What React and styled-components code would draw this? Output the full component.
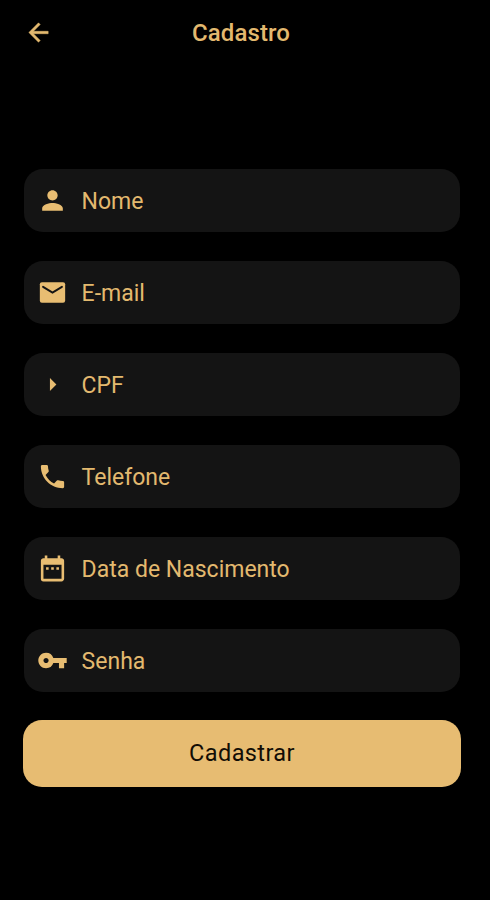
import React from "react";
import styled, { createGlobalStyle } from "styled-components";
import {
  MdArrowBack,
  MdArrowRight,
  MdDateRange,
  MdPerson,
  MdPhone,
  MdVpnKey,
} from "react-icons/md";

const GlobalStyle = createGlobalStyle`
  * {
    box-sizing: border-box;
  }
  body {
    margin: 0;
    background: #000;
    font-family: Roboto, sans-serif;
  }
`;

const Screen = styled.div`
  min-height: 900px;
  background: #000;
  color: #e3b96f;
`;

const Header = styled.header`
  display: grid;
  grid-template-columns: 76px 1fr 84px;
  align-items: center;
  height: 65px;
`;

const BackButton = styled.button`
  display: flex;
  justify-content: center;
  padding: 0;
  border: 0;
  background: none;
  color: inherit;

  path:last-child {
    stroke: currentColor;
    stroke-width: 0.4px;
  }
`;

const Title = styled.h1`
  margin: 0;
  padding-top: 1px;
  text-align: center;
  font-size: 24px;
  font-weight: 500;
  line-height: 30px;
  letter-spacing: 0.1px;
`;

const Form = styled.main`
  display: flex;
  flex-direction: column;
  gap: 29px;
  padding: 104px 30px 0 24px;
`;

const Field = styled.div`
  display: flex;
  align-items: center;
  gap: 13.6px;
  height: 63px;
  padding-left: 13px;
  border-radius: 19px;
  background: #141414;

  svg {
    flex: none;
    color: #e8bd72;
  }
`;

const Label = styled.span`
  padding-top: 2px;
  font-size: 23px;
  line-height: 30px;
`;

const SubmitButton = styled.button`
  height: 67px;
  margin: -1.5px -1px 0;
  padding: 0 0 1px;
  border: 0;
  border-radius: 19px;
  background: #e7bc72;
  color: #120d05;
  font-family: inherit;
  font-size: 23.5px;
  letter-spacing: 0.4px;
`;

function MailIcon({ size }) {
  return (
    <svg width={size} height={size} viewBox="0 0 24 24">
      <rect x="2.2" y="4" width="19.6" height="16" rx="1.6" fill="currentColor" />
      <path
        d="M4.7 7.6L12 12l7.3-4.4"
        fill="none"
        stroke="#141414"
        strokeWidth="1.5"
        strokeLinecap="round"
      />
    </svg>
  );
}

const FIELDS = [
  { label: "Nome", Icon: MdPerson },
  { label: "E-mail", Icon: MailIcon },
  { label: "CPF", Icon: MdArrowRight },
  { label: "Telefone", Icon: MdPhone },
  { label: "Data de Nascimento", Icon: MdDateRange },
  { label: "Senha", Icon: MdVpnKey },
];

function App() {
  return (
    <>
      <GlobalStyle />
      <Screen>
        <Header>
          <BackButton aria-label="Voltar">
            <MdArrowBack size={29} />
          </BackButton>
          <Title>Cadastro</Title>
        </Header>
        <Form>
          {FIELDS.map(({ label, Icon }) => (
            <Field key={label}>
              <Icon size={31} />
              <Label>{label}</Label>
            </Field>
          ))}
          <SubmitButton>Cadastrar</SubmitButton>
        </Form>
      </Screen>
    </>
  );
}

export default App;
